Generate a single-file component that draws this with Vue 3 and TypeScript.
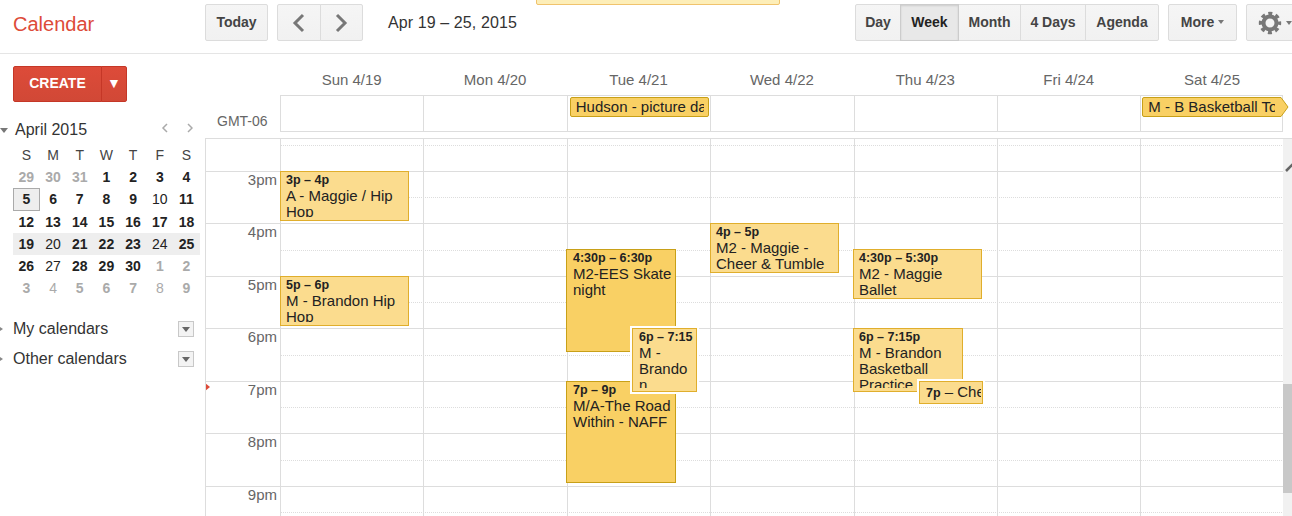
<template>
  <div class="page">
    <div class="notice"></div>

    <header class="topbar">
      <div class="logo">Calendar</div>
      <button class="btn today-btn">Today</button>
      <div class="btn-group nav">
        <button class="btn">
          <svg width="14" height="20" viewBox="0 0 14 20"><path d="M11 2 3 10l8 8" fill="none" stroke="#777" stroke-width="3" /></svg>
        </button>
        <button class="btn">
          <svg width="14" height="20" viewBox="0 0 14 20"><path d="m3 2 8 8-8 8" fill="none" stroke="#777" stroke-width="3" /></svg>
        </button>
      </div>
      <div class="range">Apr 19 – 25, 2015</div>
      <div class="spacer"></div>
      <div class="btn-group views">
        <button v-for="v in views" :key="v" class="btn" :class="{ active: v === 'Week' }">{{ v }}</button>
      </div>
      <button class="btn more">More<i class="caret"></i></button>
      <button class="btn gear">
        <svg width="24" height="24" viewBox="0 0 24 24">
          <circle cx="12" cy="12" r="6.5" fill="none" stroke="#777" stroke-width="4" />
          <circle cx="12" cy="12" r="9.5" fill="none" stroke="#777" stroke-width="3.4" stroke-dasharray="4 3.46" stroke-dashoffset="2" />
        </svg>
        <i class="caret"></i>
      </button>
    </header>

    <div class="content">
      <aside class="sidebar">
        <div class="create">
          <button class="create-main">CREATE</button>
          <button class="create-drop">▼</button>
        </div>

        <div class="month-head">
          <i class="tri-down"></i>
          <span class="month-name">April 2015</span>
          <svg class="month-nav" width="32" height="10" viewBox="0 0 32 10">
            <path d="M6 1 2 5l4 4M27 1l4 4-4 4" fill="none" stroke="#aaa" stroke-width="1.5" />
          </svg>
        </div>

        <div class="mini">
          <div v-for="(d, i) in weekLetters" :key="i" class="letter">{{ d }}</div>
          <template v-for="(week, w) in miniWeeks" :key="w">
            <div
              v-for="(c, i) in week"
              :key="i"
              class="mini-day"
              :class="{ bold: c.bold, muted: c.muted, current: w === 3, selected: w === 1 && i === 0 }"
            >{{ c.n }}</div>
          </template>
        </div>

        <div v-for="c in calendars" :key="c" class="cal-row">
          <i class="tri-right"></i>
          <span>{{ c }}</span>
          <span class="cal-drop"><i class="caret dark"></i></span>
        </div>
      </aside>

      <main class="main">
        <div class="day-heads">
          <div v-for="d in days" :key="d">{{ d }}</div>
        </div>

        <div class="allday-wrap">
          <div class="gmt">GMT-06</div>
          <div class="allday">
            <div v-for="(d, i) in days" :key="d" class="allday-cell">
              <div v-if="i === 2" class="chip hudson"><span>Hudson - picture day</span></div>
              <div v-if="i === 6" class="chip tourney">
                <span>M - B Basketball Tournament</span>
                <svg class="chip-tip" width="11" height="20" viewBox="0 0 11 20">
                  <path d="M0 .5h3l7 9.5-7 9.5H0" fill="#f9d064" stroke="#c8a018" />
                </svg>
              </div>
            </div>
          </div>
        </div>

        <div class="grid">
          <i class="now-marker"></i>
          <div class="row first"></div>
          <div v-for="h in hours" :key="h" class="row">
            <span class="hour">{{ h }}</span>
          </div>

          <div class="columns">
            <div v-for="d in days" :key="d" class="col"></div>
          </div>

          <div
            v-for="e in events"
            :key="e.time + e.title"
            class="event"
            :class="{ dark: e.dark, ring: e.ring }"
            :style="eventStyle(e)"
          >
            <div v-if="e.inline" class="event-clip one-line">
              <b class="event-time">{{ e.time }}</b> {{ e.title }}
            </div>
            <div v-else class="event-clip">
              <div class="event-time">{{ e.time }}</div>
              <div class="event-title">{{ e.title }}</div>
            </div>
          </div>

          <div class="scrollbar">
            <svg class="scroll-arrow" width="9" height="14" viewBox="0 0 9 14"><path d="m1 12 8-8" stroke="#666" stroke-width="2.5" fill="none" /></svg>
            <div class="scroll-thumb"></div>
          </div>
        </div>
      </main>
    </div>
  </div>
</template>

<script setup lang="ts">
interface MiniCell {
  n: number
  bold: boolean
  muted: boolean
}

interface CalEvent {
  left: number
  top: number
  width: number
  height: number
  time: string
  title: string
  dark?: boolean
  ring?: boolean
  inline?: boolean
}

const views = ['Day', 'Week', 'Month', '4 Days', 'Agenda']
const days = ['Sun 4/19', 'Mon 4/20', 'Tue 4/21', 'Wed 4/22', 'Thu 4/23', 'Fri 4/24', 'Sat 4/25']
const weekLetters = ['S', 'M', 'T', 'W', 'T', 'F', 'S']
const calendars = ['My calendars', 'Other calendars']
const hours = ['3pm', '4pm', '5pm', '6pm', '7pm', '8pm', '9pm']

// n, bold, muted
const cell = (n: number, bold = true, muted = false): MiniCell => ({ n, bold, muted })

const miniWeeks: MiniCell[][] = [
  [cell(29, true, true), cell(30, true, true), cell(31, true, true), cell(1), cell(2), cell(3), cell(4)],
  [cell(5), cell(6), cell(7), cell(8), cell(9), cell(10, false), cell(11)],
  [cell(12), cell(13), cell(14), cell(15), cell(16), cell(17), cell(18)],
  [cell(19), cell(20, false), cell(21), cell(22), cell(23), cell(24, false), cell(25)],
  [cell(26), cell(27, false), cell(28), cell(29), cell(30), cell(1, true, true), cell(2, true, true)],
  [cell(3, true, true), cell(4, false, true), cell(5, true, true), cell(6, true, true), cell(7, true, true), cell(8, false, true), cell(9, true, true)]
]

// place on the canvas is measured from the top left corner of the week grid
const events: CalEvent[] = [
  { left: 74, top: 32, width: 129, height: 50, time: '3p – 4p', title: 'A - Maggie / Hip Hop' },
  { left: 74, top: 137, width: 129, height: 50, time: '5p – 6p', title: 'M - Brandon Hip Hop' },
  { left: 360, top: 110, width: 110, height: 103, time: '4:30p – 6:30p', title: 'M2-EES Skate night', dark: true },
  { left: 360, top: 242, width: 110, height: 102, time: '7p – 9p', title: 'M/A-The Road Within - NAFF', dark: true },
  { left: 426, top: 189, width: 65, height: 64, time: '6p – 7:15p', title: 'M - Brandon Basketball', ring: true },
  { left: 504, top: 84, width: 129, height: 50, time: '4p – 5p', title: 'M2 - Maggie - Cheer & Tumble' },
  { left: 647, top: 110, width: 129, height: 50, time: '4:30p – 5:30p', title: 'M2 - Maggie Ballet' },
  { left: 647, top: 189, width: 110, height: 64, time: '6p – 7:15p', title: 'M - Brandon Basketball Practice' },
  { left: 713, top: 242, width: 64, height: 23, time: '7p', title: '– Cheer', ring: true, inline: true }
]

const eventStyle = (e: CalEvent) => ({
  left: `${e.left}px`,
  top: `${e.top}px`,
  width: `${e.width}px`,
  height: `${e.height}px`
})
</script>

<style>
html,
body {
  overflow: hidden;
  background: #fff;
}
</style>

<style scoped>
.page {
  position: relative;
  display: flex;
  flex-direction: column;
  width: 1292px;
  height: 516px;
  overflow: hidden;
  background: #fff;
  font-family: "Liberation Sans", Arial, sans-serif;
  color: #222;
}

.notice {
  position: absolute;
  left: 536px;
  top: -6px;
  width: 244px;
  height: 11px;
  box-sizing: border-box;
  background: #fdeeb8;
  border: 1px solid #f0c36d;
  border-radius: 2px;
}

/* top bar */
.topbar {
  display: flex;
  align-items: flex-start;
  flex: none;
  height: 54px;
  box-sizing: border-box;
  padding-top: 4px;
  border-bottom: 1px solid #e5e5e5;
}

.logo {
  width: 205px;
  flex: none;
  box-sizing: border-box;
  padding: 7px 0 0 13px;
  font-size: 20px;
  line-height: 26px;
  color: #dd4b39;
}

.btn {
  display: flex;
  align-items: center;
  justify-content: center;
  height: 37px;
  box-sizing: border-box;
  padding: 0 0 2px;
  background: linear-gradient(#f5f5f5, #f1f1f1);
  border: 1px solid #dcdcdc;
  border-radius: 2px;
  font-family: inherit;
  font-size: 14px;
  font-weight: bold;
  color: #444;
}

.today-btn {
  width: 63px;
  flex: none;
}

.btn-group {
  display: flex;
  flex: none;
}

.btn-group .btn {
  border-radius: 0;
}

.btn-group .btn + .btn {
  margin-left: -1px;
}

.btn-group .btn:first-child {
  border-radius: 2px 0 0 2px;
}

.btn-group .btn:last-child {
  border-radius: 0 2px 2px 0;
}

.nav {
  margin-left: 9px;
}

.nav .btn {
  width: 43.5px;
  padding: 0;
}

.range {
  flex: none;
  margin-left: 25px;
  font-size: 16px;
  letter-spacing: 0.1px;
  line-height: 37px;
  color: #333;
}

.spacer {
  flex: 1;
}

.views {
  display: grid;
  grid-template-columns: 46px 58px 62px 65px 73px;
}

.views .btn.active {
  background: #e8e8e8;
  border-color: #ccc;
  box-shadow: inset 0 1px 2px rgba(0, 0, 0, 0.12);
  color: #222;
  position: relative;
}

.more {
  flex: none;
  width: 69px;
  margin-left: 9px;
}

.gear {
  flex: none;
  justify-content: flex-start;
  width: 54px;
  margin-left: 9px;
  margin-right: -8px;
  padding: 0 0 0 11px;
}

.caret {
  display: inline-block;
  width: 0;
  height: 0;
  margin-left: 4px;
  border-left: 3.5px solid transparent;
  border-right: 3.5px solid transparent;
  border-top: 4px solid #777;
}

.caret.dark {
  margin: 0;
  border-left-width: 4px;
  border-right-width: 4px;
  border-top: 5px solid #666;
}

/* sidebar */
.content {
  display: flex;
  flex: 1;
  min-height: 0;
}

.sidebar {
  width: 205px;
  flex: none;
  box-sizing: border-box;
  padding-top: 12px;
}

.create {
  display: flex;
  width: 114px;
  height: 36px;
  margin-left: 13px;
}

.create-main,
.create-drop {
  height: 36px;
  padding: 0 0 2px;
  background: linear-gradient(#dd4b39, #d14836);
  border: 1px solid #c53727;
  color: #fff;
  font-family: inherit;
  font-weight: bold;
}

.create-main {
  width: 89px;
  border-radius: 2px 0 0 2px;
  font-size: 14px;
}

.create-drop {
  width: 26px;
  margin-left: -1px;
  border-radius: 0 2px 2px 0;
  font-size: 14px;
}

.month-head {
  display: flex;
  align-items: center;
  height: 20px;
  margin-top: 18px;
}

.tri-down {
  width: 0;
  height: 0;
  margin-right: 7px;
  border-left: 4px solid transparent;
  border-right: 4px solid transparent;
  border-top: 5px solid #777;
}

.month-name {
  font-size: 16px;
  color: #333;
}

.month-nav {
  margin-left: auto;
  margin-right: 12px;
  margin-top: -5px;
}

.mini {
  display: grid;
  grid-template-columns: repeat(7, 26.7px);
  grid-auto-rows: 22.2px;
  margin: 4px 0 0 13px;
  font-size: 14px;
  line-height: 22px;
  text-align: center;
}

.letter {
  color: #444;
}

.mini-day {
  box-sizing: border-box;
}

.mini-day.bold {
  font-weight: bold;
}

.mini-day.muted {
  color: #aaa;
}

.mini-day.current {
  background: #eee;
}

.mini-day.selected {
  background: #eee;
  border: 1px solid #aaa;
  line-height: 20px;
}

.cal-row {
  display: flex;
  align-items: center;
  height: 30px;
  font-size: 16px;
  color: #333;
}

.mini + .cal-row {
  margin-top: 15px;
}

.tri-right {
  width: 0;
  height: 0;
  margin-right: 10px;
  border-top: 2.5px solid transparent;
  border-bottom: 2.5px solid transparent;
  border-left: 3px solid #888;
}

.cal-drop {
  display: flex;
  align-items: center;
  justify-content: center;
  width: 16px;
  height: 16px;
  box-sizing: border-box;
  margin-left: auto;
  margin-right: 11px;
  background: #f3f3f3;
  border: 1px solid #c8c8c8;
}

/* week view */
.main {
  flex: 1;
  min-width: 0;
  display: flex;
  flex-direction: column;
}

.day-heads {
  display: grid;
  grid-template-columns: repeat(7, 143.4px);
  flex: none;
  height: 41px;
  box-sizing: border-box;
  padding: 17px 0 0 75px;
  font-size: 15px;
  line-height: 18px;
  text-align: center;
  color: #666;
}

.allday-wrap {
  display: flex;
  flex: none;
  height: 37px;
}

.gmt {
  width: 75px;
  flex: none;
  box-sizing: border-box;
  padding: 18px 0 0 12px;
  font-size: 14px;
  line-height: 16px;
  color: #666;
}

.allday {
  display: grid;
  grid-template-columns: 142.4px repeat(5, 143.4px) 1fr;
  flex: none;
  box-sizing: border-box;
  width: 1003px;
  border: 1px solid #ddd;
}

.allday-cell {
  position: relative;
  padding-top: 1px;
}

.allday-cell + .allday-cell {
  border-left: 1px solid #ddd;
}

.chip {
  position: relative;
  height: 20px;
  box-sizing: border-box;
  background: #f9d064;
  border: 1px solid #c8a018;
  border-radius: 2px;
  font-size: 15px;
  line-height: 18px;
  color: #222;
}

.chip span {
  display: block;
  margin: 0 4px 0 5px;
  overflow: hidden;
  white-space: nowrap;
}

.hudson {
  width: 139px;
  margin-left: 2px;
}

.tourney {
  width: 138px;
  margin-left: 1px;
}

.chip-tip {
  position: absolute;
  right: -10px;
  top: -1px;
}

.grid {
  position: relative;
  flex: 1;
  min-height: 0;
  margin-top: 6px;
  overflow: hidden;
  border-top: 1px solid #ddd;
  border-left: 1px solid #ddd;
}

.row {
  position: relative;
  height: 52.5px;
  box-sizing: border-box;
  border-top: 1px solid #ddd;
}

.row.first {
  height: 31.7px;
  border-top: 0;
}

.row::after {
  content: "";
  position: absolute;
  left: 74px;
  right: 0;
  top: 25.5px;
  border-top: 1px dotted #ddd;
}

.row.first::after {
  top: 6px;
}

.hour {
  position: absolute;
  right: 1015px;
  top: 0;
  font-size: 15px;
  line-height: 16px;
  color: #666;
}

.columns {
  position: absolute;
  left: 74px;
  top: 0;
  bottom: 0;
  display: grid;
  grid-template-columns: repeat(7, 143.4px);
}

.col {
  border-left: 1px solid #ddd;
}

.now-marker {
  position: absolute;
  left: -1px;
  top: 244px;
  border-top: 4px solid transparent;
  border-bottom: 4px solid transparent;
  border-left: 5px solid #dd4b39;
}

.event {
  position: absolute;
  box-sizing: border-box;
  background: #fbdc8e;
  border: 1px solid #e0ae2c;
  font-size: 15px;
  line-height: 16px;
  color: #222;
}

.event.dark {
  background: #f9d064;
  border-color: #c8a018;
}

.event.ring {
  box-shadow: 0 0 0 2px #fff;
}

.event-clip {
  height: calc(100% - 3px);
  box-sizing: border-box;
  margin-right: 3px;
  padding: 1px 0 0 5px;
  overflow: hidden;
  overflow-wrap: break-word;
}

.event.dark .event-clip,
.event.ring .event-clip {
  padding-left: 6px;
}

.event-clip.one-line {
  height: 100%;
  margin-right: 1px;
  white-space: nowrap;
  line-height: 20px;
  padding-top: 0;
}

.event-time {
  display: block;
  font-size: 12.5px;
  line-height: 15px;
  font-weight: bold;
  white-space: nowrap;
}

.one-line .event-time {
  display: inline;
  line-height: 14px;
}

.scrollbar {
  position: absolute;
  left: 1077px;
  top: 0;
  bottom: 0;
  width: 10px;
  background: #f1f1f1;
}

.scroll-arrow {
  position: absolute;
  left: 2px;
  top: 20px;
}

.scroll-thumb {
  position: absolute;
  left: 0;
  top: 245px;
  width: 10px;
  height: 109px;
  background: #c8c8c8;
}
</style>
